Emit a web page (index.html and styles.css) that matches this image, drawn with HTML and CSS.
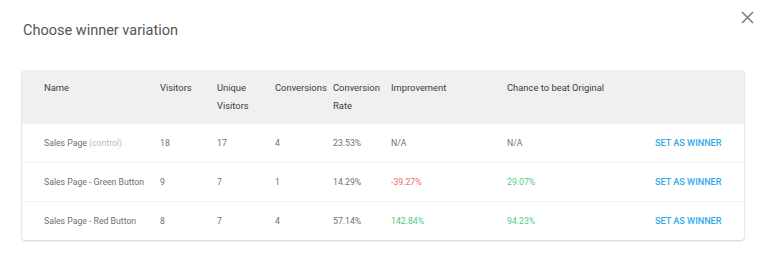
FILE: index.html
```html
<!DOCTYPE html>
<html>
<head>
<meta charset="utf-8">
<link rel="stylesheet" href="styles.css">
</head>
<body>
<div class="modal">
  <div class="modal-head">
    <h1 class="title">Choose winner variation</h1>
    <button class="close" aria-label="Close">
      <svg width="13" height="13" viewBox="0 0 13 13"><path d="M1 1L12 12M12 1L1 12" stroke="#7a7a7a" stroke-width="1.5" fill="none"/></svg>
    </button>
  </div>
  <div class="card">
    <div class="row head">
      <div>Name</div>
      <div>Visitors</div>
      <div>Unique<br>Visitors</div>
      <div>Conversions</div>
      <div>Conversion<br>Rate</div>
      <div>Improvement</div>
      <div>Chance to beat Original</div>
      <div></div>
    </div>
    <div class="row">
      <div>Sales Page <span class="muted">(control)</span></div>
      <div>18</div>
      <div>17</div>
      <div>4</div>
      <div>23.53%</div>
      <div>N/A</div>
      <div>N/A</div>
      <div><a class="action" href="#">SET AS WINNER</a></div>
    </div>
    <div class="row">
      <div>Sales Page - Green Button</div>
      <div>9</div>
      <div>7</div>
      <div>1</div>
      <div>14.29%</div>
      <div class="neg">-39.27%</div>
      <div class="pos">29.07%</div>
      <div><a class="action" href="#">SET AS WINNER</a></div>
    </div>
    <div class="row">
      <div>Sales Page - Red Button</div>
      <div>8</div>
      <div>7</div>
      <div>4</div>
      <div>57.14%</div>
      <div class="pos">142.84%</div>
      <div class="pos">94.23%</div>
      <div><a class="action" href="#">SET AS WINNER</a></div>
    </div>
  </div>
</div>
</body>
</html>
```
FILE: styles.css
```css
* { box-sizing: border-box; }
html, body { margin: 0; padding: 0; background: #fff; }
body { font-family: Roboto, "Liberation Sans", sans-serif; color: #666; }
.modal { width: 768px; height: 261px; padding: 0 0 0 22px; }
.modal-head { display: flex; justify-content: space-between; align-items: flex-start; height: 71px; }
.title { margin: 22px 0 0 1px; font-size: 14.5px; font-weight: 400; color: #555; line-height: 18px; }
.close { margin: 11px 14px 0 0; padding: 0; border: 0; background: none; width: 13px; height: 13px; display: flex; }
.card {
  width: 722px;
  border-radius: 3px;
  box-shadow: 0 0 2px rgba(0,0,0,0.22), 0 1px 2px rgba(0,0,0,0.12);
  overflow: hidden;
  background: #fff;
}
.row {
  display: grid;
  grid-template-columns: 116px 57px 58px 58px 58px 116px 148px 67px;
  padding: 0 22px;
  height: 39px;
  align-items: center;
  font-size: 8.7px;
  color: #707070;
  border-top: 1px solid #f2f2f2;
}
.row.head {
  background: #f0f0f0;
  height: 52px;
  align-items: start;
  padding-top: 8px;
  border-top: 0;
  font-size: 9.4px;
  font-weight: 400;
  line-height: 18px;
  color: #3c3c3c;
}
.muted { color: #bbb; }
.neg { color: #f26a62; }
.pos { color: #4ccd80; }
.action { color: #33aae8; text-decoration: none; font-size: 9.1px; font-weight: 500; white-space: nowrap; }
```
